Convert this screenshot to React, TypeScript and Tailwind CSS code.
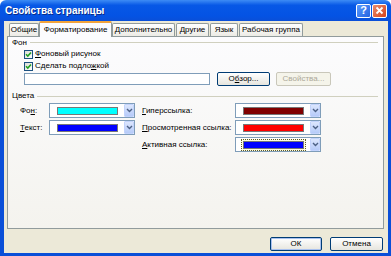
import React from 'react';

const font = { fontFamily: '"Liberation Sans", Arial, sans-serif' };

function Check({ label, u, rest }: { label: string; u: string; rest: string }) {
    return (
        <div className="flex items-center h-[12px] pl-[12px]">
            {/* XP checkbox */}
            <div className="w-[9px] h-[9px] border border-[#1c5180] bg-[linear-gradient(135deg,#dcdcd7,#ffffff)] flex items-center justify-center">
                <svg width="7" height="7" viewBox="0 0 7 7">
                    <path d="M1 3.2 L2.8 5 L6 1.5" fill="none" stroke="#21a121" strokeWidth="1.6" />
                </svg>
            </div>
            <span className="ml-[2px] text-[8px] text-black leading-none whitespace-nowrap">
                {label}
                <span className="underline">{u}</span>
                {rest}
            </span>
        </div>
    );
}

function ColorCombo({ color, focused }: { color: string; focused?: boolean }) {
    return (
        <div className="w-[86px] h-[15px] border border-[#7f9db9] bg-white flex items-center">
            <div className="flex-1 flex items-center pl-[5px] pr-[4px]">
                <div className={focused ? 'p-[1px] border border-dotted border-[#5b5b2a] bg-[#fffbe0]' : 'p-[2px]'}>
                    <div className="w-[61px] h-[8px] border border-[#777]" style={{ background: color }} />
                </div>
            </div>
            <div className="w-[13px] h-[13px] rounded-[1px] bg-[linear-gradient(to_bottom,#dce6fd,#b6cbf9)] border border-[#c2d3fc] flex items-center justify-center">
                <svg width="7" height="5" viewBox="0 0 7 5">
                    <path d="M1 1 L3.5 3.5 L6 1" fill="none" stroke="#4d6185" strokeWidth="1.4" />
                </svg>
            </div>
        </div>
    );
}

function Btn({ children, disabled, def }: { children: React.ReactNode; disabled?: boolean; def?: boolean }) {
    return (
        <div
            className={
                disabled
                    ? 'w-[55px] h-[14px] rounded-[2px] border border-[#c9c7ba] bg-[#f5f4ea] text-[#aca899] text-[8px] flex items-center justify-center whitespace-nowrap'
                    : def
                    ? 'w-[52px] h-[14px] rounded-[2px] border border-[#003c74] bg-[linear-gradient(to_bottom,#ffffff,#e6e5de)] shadow-[inset_0_0_0_1px_#a9c1ef] text-black text-[8px] flex items-center justify-center whitespace-nowrap'
                    : 'w-[53px] h-[14px] rounded-[2px] border border-[#003c74] bg-[linear-gradient(to_bottom,#ffffff,#e6e5de)] text-black text-[8px] flex items-center justify-center whitespace-nowrap'
            }
        >
            {children}
        </div>
    );
}

const tabs = [
    { name: 'Общие', w: 30 },
    { name: 'Форматирование', w: 73, active: true },
    { name: 'Дополнительно', w: 63 },
    { name: 'Другие', w: 33 },
    { name: 'Язык', w: 28 },
    { name: 'Рабочая группа', w: 64 },
];

export default function App() {
    return (
        <div className="w-[391px] h-[256px] flex flex-col overflow-hidden" style={font}>
            {/* Title bar */}
            <div className="h-[21px] shrink-0 flex items-center justify-between pl-[5px] pr-[4px] rounded-t-[6px] bg-[linear-gradient(to_bottom,#3d8cf5,#0758e6_25%,#0453e4_75%,#0a4fd8)]">
                <span className="text-white font-bold text-[10px] [text-shadow:1px_1px_0_#0b2d8a]">Свойства страницы</span>
                <div className="flex gap-[1px]">
                    <div className="w-[15px] h-[14px] rounded-[2px] border border-white bg-[linear-gradient(135deg,#5a9bff,#2663e0)] flex items-center justify-center text-white font-bold text-[11px] leading-none">
                        ?
                    </div>
                    <div className="w-[15px] h-[14px] rounded-[2px] border border-white bg-[linear-gradient(135deg,#e98c6d,#d5431c)] flex items-center justify-center">
                        <svg width="9" height="9" viewBox="0 0 9 9">
                            <path d="M1.5 1.5 L7.5 7.5 M7.5 1.5 L1.5 7.5" stroke="white" strokeWidth="1.8" />
                        </svg>
                    </div>
                </div>
            </div>

            {/* Window body */}
            <div className="flex-1 flex flex-col bg-[#ece9d8] border-l-[4px] border-r-[3px] border-b-[3px] border-[#0a4fd8] pl-[3px] pr-[4px]">
                {/* Tabs */}
                <div className="h-[15px] shrink-0 flex items-end pl-[2px] gap-[1px]">
                    {tabs.map((t) =>
                        t.active ? (
                            <div
                                key={t.name}
                                className="h-[16px] -mx-[1px] -mb-[1px] relative z-10 border-x border-[#919b9c] border-t-[2px] border-t-[#f2a33a] rounded-t-[2px] bg-[#fcfcfe] text-[8px] text-black flex items-center justify-center whitespace-nowrap"
                                style={{ width: t.w }}
                            >
                                {t.name}
                            </div>
                        ) : (
                            <div
                                key={t.name}
                                className="h-[13px] border-x border-t border-[#919b9c] rounded-t-[2px] bg-[linear-gradient(to_bottom,#ffffff,#ecebe5)] text-[8px] text-black flex items-center justify-center whitespace-nowrap"
                                style={{ width: t.w }}
                            >
                                {t.name}
                            </div>
                        )
                    )}
                </div>

                {/* Tab page */}
                <div className="h-[193px] shrink-0 border border-[#919b9c] bg-[linear-gradient(to_bottom,#fcfcfe,#f4f3ee)] pl-[4px] pr-[5px] flex flex-col">
                    {/* Фон group */}
                    <div className="h-[11px] flex items-center gap-[3px] text-[8px] text-black">
                        <span>Фон</span>
                        <div className="flex-1 h-0 border-t border-[#d0d0bf]" />
                    </div>
                    <Check label="" u="Ф" rest="оновый рисунок" />
                    <Check label="Сделать подло" u="ж" rest="кой" />
                    <div className="h-[14px] flex items-center pl-[12px]">
                        <div className="w-[186px] h-[12px] border border-[#7f9db9] bg-white" />
                        <div className="ml-[7px]">
                            <Btn>
                                О<span className="underline">б</span>зор...
                            </Btn>
                        </div>
                        <div className="ml-[6px]">
                            <Btn disabled>Свойства...</Btn>
                        </div>
                    </div>

                    {/* Цвета group */}
                    <div className="h-[10px] mt-[5px] flex items-center gap-[3px] text-[8px] text-black">
                        <span>Цвета</span>
                        <div className="flex-1 h-0 border-t border-[#d0d0bf]" />
                    </div>
                    <div className="mt-[2px] pl-[8px] flex flex-col gap-[2px] text-[8px] text-black whitespace-nowrap">
                        <div className="flex items-center">
                            <span className="w-[29px]">
                                Фо<span className="underline">н</span>:
                            </span>
                            <ColorCombo color="#00ffff" />
                            <span className="w-[93px] ml-[7px]">
                                <span className="underline">Г</span>иперссылка:
                            </span>
                            <ColorCombo color="#800000" />
                        </div>
                        <div className="flex items-center">
                            <span className="w-[29px]">
                                <span className="underline">Т</span>екст:
                            </span>
                            <ColorCombo color="#0000ff" />
                            <span className="w-[93px] ml-[7px]">
                                <span className="underline">П</span>росмотренная ссылка:
                            </span>
                            <ColorCombo color="#ff0000" />
                        </div>
                        <div className="flex items-center">
                            <span className="w-[122px]" />
                            <span className="w-[93px]">
                                <span className="underline">А</span>ктивная ссылка:
                            </span>
                            <ColorCombo color="#0000ff" focused />
                        </div>
                    </div>
                </div>

                {/* Footer buttons */}
                <div className="flex justify-end gap-[8px] mt-[8px] pr-[1px]">
                    <Btn def>ОК</Btn>
                    <Btn>Отмена</Btn>
                </div>
            </div>
        </div>
    );
}
